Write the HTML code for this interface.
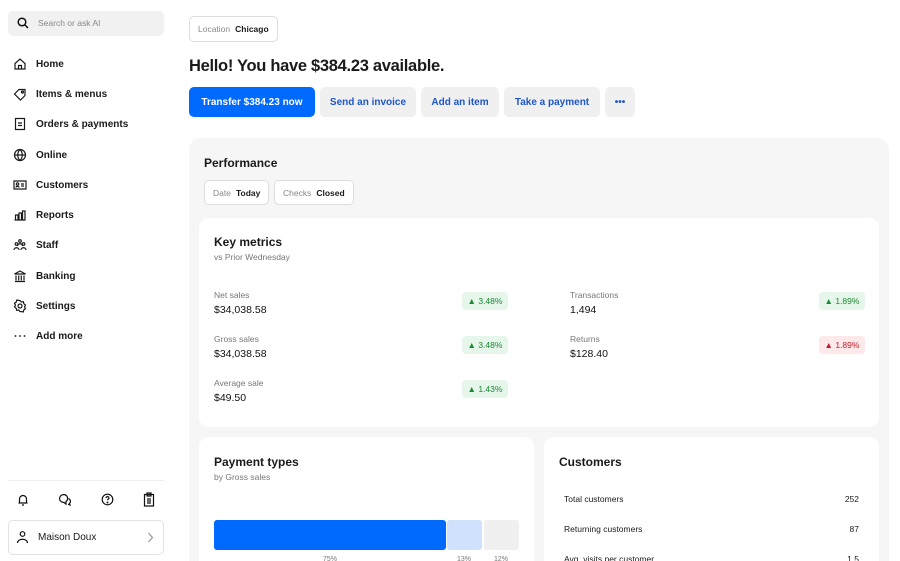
<!DOCTYPE html>
<html><head><style>
*{box-sizing:border-box;margin:0;padding:0}
html,body{width:900px;height:561px;overflow:hidden}
body{background:#fff;font-family:"Liberation Sans",Arial,sans-serif;color:#1a1a1a;position:relative}
.a{position:absolute}
.nav{position:absolute;left:13px;font-size:10px;font-weight:600;display:flex;align-items:center}
.nav svg{width:14px;height:14px;margin-right:9px}
.nav svg *{fill:none;stroke:#1a1a1a;stroke-width:1.2}
.nav svg .d{fill:#1a1a1a;stroke:none}
.btn{position:absolute;top:87px;height:30px;border-radius:5px;background:#f0f0f0;color:#1f56c8;font-size:10px;font-weight:bold;display:flex;align-items:center;justify-content:center}
.chip{position:absolute;height:25px;border:1px solid #ddd;border-radius:5px;font-size:8.5px;display:flex;align-items:center;padding:0 8px;background:#fff}
.chip span{color:#888;margin-right:5px}
.chip b{color:#1a1a1a}
.lbl{position:absolute;font-size:8.5px;color:#777}
.val{position:absolute;font-size:10.5px;color:#111}
.badge{position:absolute;width:46px;height:18px;border-radius:4px;background:#e6f6ea;color:#1b8a34;font-size:8.5px;display:flex;align-items:center;justify-content:center}
.badge.r{background:#fde8ea;color:#c8192e}
.card{position:absolute;background:#fff;border-radius:10px 10px 0 0;overflow:hidden}
h3{position:absolute;font-size:12px;font-weight:bold}
.row{position:absolute;left:20px;right:20px;font-size:8.5px;display:flex;justify-content:space-between}
</style></head><body>
<div class="a" style="left:8px;top:11px;width:156px;height:25px;background:#f1f1f1;border-radius:5px"></div>
<svg class="a" style="left:17px;top:17px" width="12" height="12" viewBox="0 0 12 12" fill="none" stroke="#111" stroke-width="1.5"><circle cx="5" cy="5" r="3.8"/><path d="M8 8l3 3"/></svg>
<div class="a" style="left:38px;top:18px;font-size:8.5px;color:#888">Search or ask AI</div>

<div class="nav" style="top:57px"><svg viewBox="0 0 14 14"><path d="M2 6.5L7 2l5 4.5V12H2z M5.5 12V8.5h3V12"/></svg>Home</div>
<div class="nav" style="top:87px"><svg viewBox="0 0 14 14"><path d="M1.5 7L6 2.5h6v6L7.5 13z"/><circle cx="9.5" cy="5" r="1"/></svg>Items &amp; menus</div>
<div class="nav" style="top:117px"><svg viewBox="0 0 14 14"><path d="M2.5 1.5h9v11h-9z M5 6h4 M5 8.5h4"/></svg>Orders &amp; payments</div>
<div class="nav" style="top:148px"><svg viewBox="0 0 14 14"><circle cx="7" cy="7" r="5.5"/><path d="M1.5 7h11 M7 1.5c-3 3-3 8 0 11 c3-3 3-8 0-11"/></svg>Online</div>
<div class="nav" style="top:178px"><svg viewBox="0 0 14 14"><path d="M1 3h12v8H1z"/><circle cx="4.5" cy="6" r="1.2"/><path d="M3 9.5c0-1.5 3-1.5 3 0 M8 6h3 M8 8h3"/></svg>Customers</div>
<div class="nav" style="top:208px"><svg viewBox="0 0 14 14"><path d="M1.5 12h11 M2.5 12V7h2.5v5 M6 12V5h2.5v7 M9.5 12V3H12v9"/></svg>Reports</div>
<div class="nav" style="top:238px"><svg viewBox="0 0 14 14"><circle cx="7" cy="3" r="1.3"/><circle cx="3.5" cy="6" r="1.3"/><circle cx="10.5" cy="6" r="1.3"/><path d="M1 12c0-3 5-3 5 0 M8 12c0-3 5-3 5 0 M4.5 8c0-3 5-3 5 0"/></svg>Staff</div>
<div class="nav" style="top:269px"><svg viewBox="0 0 14 14"><path d="M1.5 5L7 2l5.5 3z M2 12.5h10 M3 6.5v5 M5.7 6.5v5 M8.3 6.5v5 M11 6.5v5"/></svg>Banking</div>
<div class="nav" style="top:299px"><svg viewBox="0 0 14 14"><circle cx="7" cy="7" r="2"/><path d="M7 1.5l1.3 1.5 2-.3.5 2 1.7 1.3-1 1.9 1 1.9-1.7 1.1-.5 2-2-.3L7 12.5 5.7 11l-2 .3-.5-2L1.5 8l1-1.9-1-1.9 1.7-1.1.5-2 2 .3z"/></svg>Settings</div>
<div class="nav" style="top:329px"><svg viewBox="0 0 14 14"><circle class="d" cx="2.5" cy="7" r=".9"/><circle class="d" cx="7" cy="7" r=".9"/><circle class="d" cx="11.5" cy="7" r=".9"/></svg>Add more</div>

<div class="a" style="left:8px;top:480px;width:156px;height:1px;background:#eee"></div>
<svg class="a" style="left:17px;top:493px" width="12" height="13" viewBox="0 0 12 13" fill="none" stroke="#111" stroke-width="1.2"><path d="M2.5 10V6a3.5 3.5 0 017 0v4 M1.5 10h9 M5 12h2"/></svg>
<svg class="a" style="left:58px;top:493px" width="14" height="13" viewBox="0 0 14 13" fill="none" stroke="#111" stroke-width="1.2"><path d="M6 1.5a4.5 4 0 100 8l2 1.5V8.5a4.5 4 0 00-2-7z M10.5 5.5a3 3 0 011 5l.5 1.5-2-.8"/></svg>
<svg class="a" style="left:101px;top:493px" width="13" height="13" viewBox="0 0 13 13" fill="none" stroke="#111" stroke-width="1.2"><circle cx="6.5" cy="6.5" r="5.3"/><path d="M5 5a1.5 1.5 0 113 .3c-.3.8-1.5 1-1.5 2"/><circle cx="6.5" cy="9.5" r=".4" fill="#111"/></svg>
<svg class="a" style="left:143px;top:492px" width="12" height="15" viewBox="0 0 12 15" fill="none" stroke="#111" stroke-width="1.2"><path d="M1.5 2.5h9v11.5h-9z M4 1h4v3H4z M4 7h4 M4 9h4 M4 11h4"/></svg>

<div class="a" style="left:8px;top:520px;width:156px;height:35px;border:1px solid #e2e2e2;border-radius:5px"></div>
<svg class="a" style="left:16px;top:530px" width="13" height="14" viewBox="0 0 13 14" fill="none" stroke="#111" stroke-width="1.2"><circle cx="6.5" cy="4" r="2.3"/><path d="M1.5 13c0-5 10-5 10 0"/></svg>
<div class="a" style="left:38px;top:532px;font-size:10px">Maison Doux</div>
<svg class="a" style="left:147px;top:532px" width="7" height="11" viewBox="0 0 7 11" fill="none" stroke="#999" stroke-width="1.2"><path d="M1.5 1l4 4.5-4 4.5"/></svg>

<div class="chip" style="left:189px;top:16px;height:26px"><span>Location</span><b>Chicago</b></div>
<div class="a" style="left:189px;top:57px;font-size:16.5px;font-weight:bold;letter-spacing:-.3px">Hello! You have $384.23 available.</div>
<div class="btn" style="left:189px;width:126px;background:#006aff;color:#fff">Transfer $384.23 now</div>
<div class="btn" style="left:320px;width:96px">Send an invoice</div>
<div class="btn" style="left:421px;width:78px">Add an item</div>
<div class="btn" style="left:504px;width:96px">Take a payment</div>
<div class="btn" style="left:605px;width:30px">•••</div>

<div class="a" style="left:189px;top:138px;width:700px;height:423px;background:#f6f6f6;border-radius:12px 12px 0 0"></div>
<h3 style="left:204px;top:156px">Performance</h3>
<div class="chip" style="left:204px;top:180px"><span>Date</span><b>Today</b></div>
<div class="chip" style="left:274px;top:180px"><span>Checks</span><b>Closed</b></div>

<div class="card" style="left:199px;top:218px;width:680px;height:209px;border-radius:10px">
<h3 style="left:15px;top:17px">Key metrics</h3>
<div class="lbl" style="left:15px;top:34px">vs Prior Wednesday</div>
<div class="lbl" style="left:15px;top:72px">Net sales</div><div class="val" style="left:15px;top:86px">$34,038.58</div>
<div class="badge" style="left:263px;top:74px">▲ 3.48%</div>
<div class="lbl" style="left:15px;top:116px">Gross sales</div><div class="val" style="left:15px;top:130px">$34,038.58</div>
<div class="badge" style="left:263px;top:118px">▲ 3.48%</div>
<div class="lbl" style="left:15px;top:160px">Average sale</div><div class="val" style="left:15px;top:174px">$49.50</div>
<div class="badge" style="left:263px;top:162px">▲ 1.43%</div>
<div class="lbl" style="left:371px;top:72px">Transactions</div><div class="val" style="left:371px;top:86px">1,494</div>
<div class="badge" style="left:620px;top:74px">▲ 1.89%</div>
<div class="lbl" style="left:371px;top:116px">Returns</div><div class="val" style="left:371px;top:130px">$128.40</div>
<div class="badge r" style="left:620px;top:118px">▲ 1.89%</div>
</div>

<div class="card" style="left:199px;top:437px;width:335px;height:124px">
<h3 style="left:15px;top:18px">Payment types</h3>
<div class="lbl" style="left:15px;top:35px">by Gross sales</div>
<div class="a" style="left:15px;top:83px;width:232px;height:30px;background:#006aff;border-radius:3px"></div>
<div class="a" style="left:248px;top:83px;width:35px;height:30px;background:#cfe1fd;border-radius:3px"></div>
<div class="a" style="left:285px;top:83px;width:35px;height:30px;background:#f0f0f0;border-radius:3px"></div>
<div class="lbl" style="left:124px;top:119px;font-size:7px">75%</div>
<div class="lbl" style="left:258px;top:119px;font-size:7px">13%</div>
<div class="lbl" style="left:295px;top:119px;font-size:7px">12%</div>
</div>

<div class="card" style="left:544px;top:437px;width:335px;height:124px">
<h3 style="left:15px;top:18px">Customers</h3>
<div class="row" style="top:57px"><span>Total customers</span><span>252</span></div>
<div class="row" style="top:87px"><span>Returning customers</span><span>87</span></div>
<div class="row" style="top:117px"><span>Avg. visits per customer</span><span>1.5</span></div>
</div>
</body></html>
